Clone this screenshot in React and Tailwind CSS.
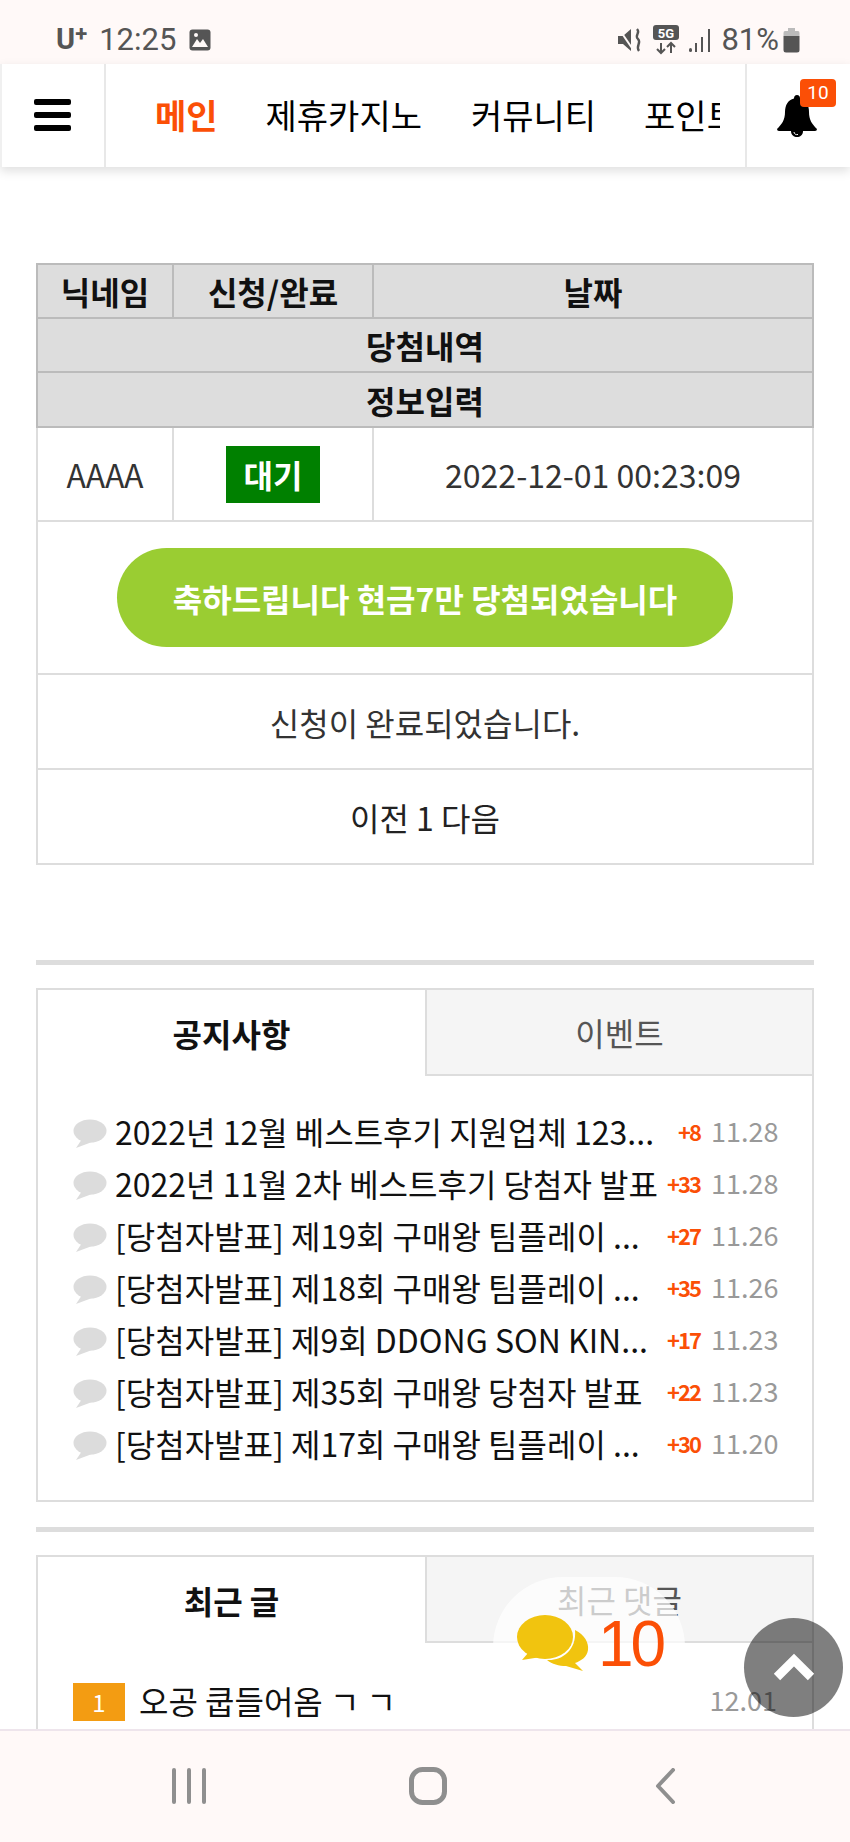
const notices = [
  { title: '2022년 12월 베스트후기 지원업체 123...', count: '+8', date: '11.28' },
  { title: '2022년 11월 2차 베스트후기 당첨자 발표', count: '+33', date: '11.28' },
  { title: '[당첨자발표] 제19회 구매왕 팀플레이 ...', count: '+27', date: '11.26' },
  { title: '[당첨자발표] 제18회 구매왕 팀플레이 ...', count: '+35', date: '11.26' },
  { title: '[당첨자발표] 제9회 DDONG SON KIN...', count: '+17', date: '11.23' },
  { title: '[당첨자발표] 제35회 구매왕 당첨자 발표', count: '+22', date: '11.23' },
  { title: '[당첨자발표] 제17회 구매왕 팀플레이 ...', count: '+30', date: '11.20' },
];

function GrayBubble() {
  return (
    <svg width="34" height="29" viewBox="0 0 34 29" className="shrink-0 mt-[4px]">
      <ellipse cx="17" cy="12" rx="16.5" ry="11.5" fill="#dcdcdc" />
      <path d="M9 20 L3 29 L19 23 Z" fill="#dcdcdc" />
    </svg>
  );
}

function ChatBubbles() {
  return (
    <svg width="72" height="58" viewBox="0 0 72 58">
      <path d="M58 15 C68 20 72 28 71 35 C70 42 64 46 58 48 L66 56 L49 51 C42 51 35 49 30 45 C44 46 60 36 58 15 Z" fill="#f1c40f" />
      <ellipse cx="28" cy="22" rx="28" ry="22" fill="#f1c40f" />
      <path d="M11 38 L5 45 L24 42 Z" fill="#f1c40f" />
    </svg>
  );
}

function BellIcon() {
  return (
    <svg width="40" height="42" viewBox="0 0 40 42" className="absolute left-[30px] top-[31px]">
      <path d="M20 0 C22 0 23 1.500 23 3.500 C29 5 32 10 32 17 C32 25 35 29 40 34 Q40 36 38 36 H2 Q0 36 0 34 C5 29 8 25 8 17 C8 10 11 5 17 3.500 C17 1.500 18 0 20 0 Z" fill="#000" />
      <path d="M14 36 C14 40 17 42 20 42 C23 42 26 40 26 36 Z" fill="#000" />
      <path d="M17 37 C17 39 19 40 21 39.500" stroke="#fff" strokeWidth="1" fill="none" />
    </svg>
  );
}

function StatusBar() {
  return (
    <div className="h-[64px] bg-[#fff9f8] flex items-center justify-between pl-[56px] pr-[50px] pt-[15px] text-[#555] font-['Roboto',sans-serif]">
      <div className="flex items-center">
        <span className="text-[29px] font-bold leading-none">U<sup className="text-[22px] -top-[8px] relative align-baseline">+</sup></span>
        <span className="ml-[12px] text-[31px] leading-none">12:25</span>
        <svg width="22" height="22" viewBox="0 0 22 22" className="ml-[13px]">
          <rect x="0.5" y="0.5" width="21" height="21" rx="3" fill="#555" />
          <path d="M3 18 L8 10 L11 14 L14 10 L19 18 Z" fill="#fff9f8" />
          <circle cx="7" cy="6" r="2" fill="#fff9f8" />
        </svg>
      </div>
      <div className="flex items-center">
        <svg width="26" height="28" viewBox="0 0 26 28">
          <path d="M1 10 H6 L14 3 V25 L6 18 H1 Z" fill="#555" />
          <path d="M2 3 L17 25" stroke="#fff9f8" strokeWidth="2" />
          <path d="M20 3 C24 7 17 9 21 13 C25 17 18 20 22 25" stroke="#555" strokeWidth="2.4" fill="none" />
        </svg>
        <svg width="26" height="30" viewBox="0 0 26 30" className="ml-[10px]">
          <rect x="0" y="0" width="26" height="15" rx="3" fill="#555" />
          <path d="M8 18 V28 M4 24 L8 28 L12 24 M18 28 V18 M14 22 L18 18 L22 22" stroke="#555" strokeWidth="2" fill="none" />
          <text x="13" y="12.5" textAnchor="middle" fontSize="13" fontWeight="700" fill="#fff" fontFamily="Roboto, sans-serif">5G</text>
        </svg>
        <svg width="22" height="26" viewBox="0 0 22 26" className="ml-[10px]">
          <rect x="0" y="21" width="3" height="4" rx="1.5" fill="#555" />
          <rect x="6" y="16" width="2" height="9" fill="#555" />
          <rect x="12" y="10" width="2" height="15" fill="#555" />
          <rect x="19" y="2" width="2" height="23" fill="#555" />
        </svg>
        <span className="ml-[10px] text-[31px] leading-none">81%</span>
        <svg width="17" height="26" viewBox="0 0 17 26" className="ml-[4px]">
          <path d="M5 1 H12 V4 H15 Q16.500 4 16.500 6 V9 H0.500 V6 Q0.500 4 2 4 H5 Z" fill="#bbb" />
          <path d="M0.500 9 H16.500 V23 Q16.500 25.500 14 25.500 H3 Q0.500 25.500 0.500 23 Z" fill="#555" />
        </svg>
      </div>
    </div>
  );
}

function TopNav() {
  return (
    <div className="relative h-[103px] bg-white shadow-[0_4px_10px_rgba(0,0,0,0.13)] flex text-[34px] text-black">
      <div className="w-[106px] shrink-0 border-x-2 border-l-[#f0f0f0] border-r-[#e8e8e8] flex items-center justify-center">
        <div className="w-[37px] flex flex-col gap-[7px] -ml-[2px] -mt-[1px]">
          <div className="h-[6px] rounded-[2px] bg-black" />
          <div className="h-[6px] rounded-[2px] bg-black" />
          <div className="h-[6px] rounded-[2px] bg-black" />
        </div>
      </div>
      <div className="w-[614px] overflow-hidden flex items-center whitespace-nowrap pl-[49px] -mt-[2px]">
        <span className="font-bold text-[#fb4f06]">메인</span>
        <span className="ml-[48px]">제휴카지노</span>
        <span className="ml-[49px]">커뮤니티</span>
        <span className="ml-[48px]">포인트샵</span>
      </div>
      <div className="ml-[25px] flex-1 border-l-2 border-l-[#e8e8e8] relative">
        <BellIcon />
      </div>
      <div className="absolute left-[800px] top-[15px] w-[36px] h-[28px] rounded-[4px] bg-[#fb4f06] text-white text-[19px] leading-[28px] text-center font-['Roboto',sans-serif]">10</div>
    </div>
  );
}

function ResultTable() {
  const th = 'border-2 border-[#bbbbbb] bg-[#dddddd] font-bold text-[#111] h-[54px] p-0';
  const td = 'border-2 border-[#dddddd] text-center p-0';
  return (
    <table className="w-[778px] ml-[36px] mt-[96px] table-fixed border-collapse text-[32px] text-[#333]">
      <colgroup>
        <col className="w-[136px]" />
        <col className="w-[200px]" />
        <col />
      </colgroup>
      <tbody>
        <tr>
          <th className={th}>닉네임</th>
          <th className={th}>신청/완료</th>
          <th className={th}>날짜</th>
        </tr>
        <tr><th colSpan={3} className={th}>당첨내역</th></tr>
        <tr><th colSpan={3} className={th + ' !h-[55px]'}>정보입력</th></tr>
        <tr className="h-[94px]">
          <td className={td}>AAAA</td>
          <td className={td}>
            <span className="inline-flex w-[94px] h-[57px] items-center justify-center bg-[#008000] text-white font-bold">대기</span>
          </td>
          <td className={td}>2022-12-01 00:23:09</td>
        </tr>
        <tr className="h-[153px]">
          <td colSpan={3} className={td}>
            <div className="mx-auto w-[616px] h-[99px] rounded-[50px] bg-[#9acd32] text-white font-bold flex items-center justify-center">축하드립니다 현금7만 당첨되었습니다</div>
          </td>
        </tr>
        <tr className="h-[95px]"><td colSpan={3} className={td}>신청이 완료되었습니다.</td></tr>
        <tr className="h-[95px]"><td colSpan={3} className={td + ' text-[#222]'}>이전 1 다음</td></tr>
      </tbody>
    </table>
  );
}

function Tabs({ left, right }) {
  return (
    <div className="flex h-[86px] text-[32px]">
      <div className="w-[387px] flex items-center justify-center font-bold text-[#111]">{left}</div>
      <div className="flex-1 bg-[#f5f5f5] border-l-2 border-b-2 border-[#dddddd] flex items-center justify-center text-[#555]">{right}</div>
    </div>
  );
}

export default function App() {
  return (
    <div className="relative w-[850px] h-[1842px] overflow-hidden bg-white font-['Noto_Sans_CJK_KR','Noto_Sans',sans-serif]">
      <StatusBar />
      <TopNav />
      <ResultTable />

      <div className="mx-[36px] mt-[95px] h-[5px] bg-[#dddddd]" />

      <div className="mx-[36px] mt-[23px] h-[514px] border-2 border-[#dddddd]">
        <Tabs left="공지사항" right="이벤트" />
        <div className="pt-[29px] pl-[35px] pr-[35px]">
          {notices.map((n) => (
            <div key={n.title} className="flex items-center h-[52px] whitespace-nowrap">
              <GrayBubble />
              <span className="ml-[8px] text-[32px] text-[#111] flex-1 overflow-hidden">{n.title}</span>
              <span className="text-[22px] font-bold text-[#fb4f06] tracking-[-2px]">{n.count}</span>
              <span className="w-[66px] ml-[11px] text-right text-[27px] text-[#999]">{n.date}</span>
            </div>
          ))}
        </div>
      </div>

      <div className="mx-[36px] mt-[25px] h-[5px] bg-[#dddddd]" />

      <div className="mx-[36px] mt-[23px] h-[400px] border-2 border-[#dddddd]">
        <Tabs left="최근 글" right="최근 댓글" />
        <div className="pt-[39px] pl-[35px] pr-[35px]">
          <div className="flex items-center h-[40px] whitespace-nowrap">
            <span className="w-[52px] h-[38px] bg-[#f39c12] text-white text-[24px] flex items-center justify-center">1</span>
            <span className="ml-[14px] -mt-[4px] text-[32px] text-[#111] flex-1">오공 쿱들어옴 ㄱ ㄱ</span>
            <span className="-mt-[4px] text-[27px] text-[#999]">12.01</span>
          </div>
        </div>
      </div>

      {/* floating chat counter */}
      <div className="absolute left-[493px] top-[1577px] w-[192px] h-[110px] rounded-t-[70px] bg-white/70" />
      <div className="absolute left-[517px] top-[1615px] flex items-start">
        <ChatBubbles />
        <span className="ml-[9px] text-[#fb4f06] text-[64px] leading-[58px] tracking-[-3px] font-['Liberation_Sans',sans-serif]">10</span>
      </div>

      {/* scroll to top */}
      <div className="absolute left-[744px] top-[1618px] w-[99px] h-[99px] rounded-full bg-black/50 flex items-center justify-center">
        <svg width="42" height="28" viewBox="0 0 42 28" className="-mt-[2px]">
          <path d="M4 24 L21 7 L38 24" stroke="#fff" strokeWidth="9" fill="none" />
        </svg>
      </div>

      {/* android nav bar */}
      <div className="absolute left-0 right-0 bottom-0 h-[113px] bg-[#fff9f8] border-t-2 border-[#eee5ec] flex items-center">
        <svg width="34" height="36" viewBox="0 0 34 36" className="ml-[172px] mt-[-2px]">
          <path d="M2 2 V34 M17 2 V34 M32 2 V34" stroke="#8f8f8f" strokeWidth="4" strokeLinecap="round" fill="none" />
        </svg>
        <svg width="38" height="38" viewBox="0 0 38 38" className="ml-[203px] mt-[-2px]">
          <rect x="2.500" y="2.500" width="33" height="33" rx="11" stroke="#8f8f8f" strokeWidth="5" fill="none" />
        </svg>
        <svg width="22" height="36" viewBox="0 0 22 36" className="ml-[207px] mt-[-2px]">
          <path d="M19 2 L4 18 L19 34" stroke="#8f8f8f" strokeWidth="4" strokeLinecap="round" strokeLinejoin="round" fill="none" />
        </svg>
      </div>
    </div>
  );
}
